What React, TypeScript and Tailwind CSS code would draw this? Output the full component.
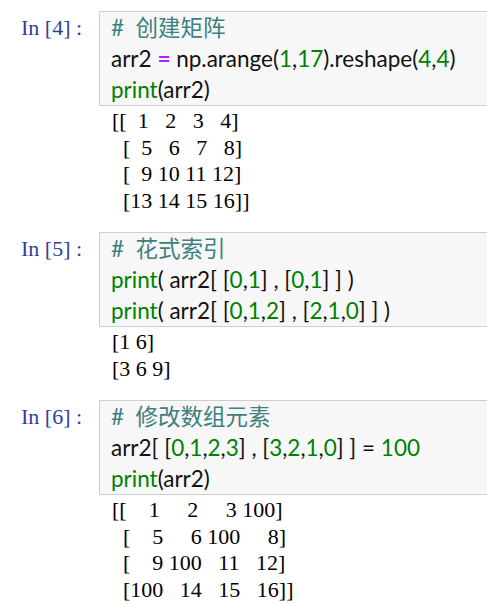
const C = ({ c, children }: { c: string; children: React.ReactNode }) => <span className={c}>{children}</span>;
const cm = "text-[#3d8080]";
const g = "text-[#008000]";
const p = "text-[#aa22ff] font-bold";

function Cell({ n, code, out }: { n: number; code: React.ReactNode[]; out: string[] }) {
  return (
    <div className="flex">
      <div className="w-[99px] shrink-0 pl-[21px] pt-[1px] text-[22px] leading-[31px] text-[#303f9f] whitespace-pre" style={{ fontFamily: '"Liberation Serif", serif' }}>
        In [{n}] :
      </div>
      <div className="flex-1 min-w-0">
        <div className="border border-[#cfcfcf] border-r-0 bg-[#f7f7f7] pl-[11px] text-[22.5px] leading-[31px] text-[#111] whitespace-pre" style={{ fontFamily: 'Lato, "Noto Sans CJK SC", sans-serif' }}>
          {code.map((l, i) => <div key={i}>{l}</div>)}
        </div>
        <div className="pl-[13px] pt-[2px] text-[22px] leading-[26.5px] text-black whitespace-pre" style={{ fontFamily: '"Liberation Serif", serif' }}>
          {out.map((l, i) => <div key={i}>{l}</div>)}
        </div>
      </div>
    </div>
  );
}

export default function App() {
  return (
    <div className="w-[487px] h-[604px] bg-white overflow-hidden pt-[11px] flex flex-col gap-[18px]">
      <Cell n={4}
        code={[
          <C c={cm}>#  创建矩阵</C>,
          <>arr2 <C c={p}>=</C> np.arange(<C c={g}>1</C>,<C c={g}>17</C>).reshape(<C c={g}>4</C>,<C c={g}>4</C>)</>,
          <><C c={g}>print</C>(arr2)</>,
        ]}
        out={["[[  1   2   3   4]", "  [  5   6   7   8]", "  [  9 10 11 12]", "  [13 14 15 16]]"]}
      />
      <Cell n={5}
        code={[
          <C c={cm}>#  花式索引</C>,
          <><C c={g}>print</C>( arr2[ [<C c={g}>0</C>,<C c={g}>1</C>] , [<C c={g}>0</C>,<C c={g}>1</C>] ] )</>,
          <><C c={g}>print</C>( arr2[ [<C c={g}>0</C>,<C c={g}>1</C>,<C c={g}>2</C>] , [<C c={g}>2</C>,<C c={g}>1</C>,<C c={g}>0</C>] ] )</>,
        ]}
        out={["[1 6]", "[3 6 9]"]}
      />
      <Cell n={6}
        code={[
          <C c={cm}>#  修改数组元素</C>,
          <>arr2[ [<C c={g}>0</C>,<C c={g}>1</C>,<C c={g}>2</C>,<C c={g}>3</C>] , [<C c={g}>3</C>,<C c={g}>2</C>,<C c={g}>1</C>,<C c={g}>0</C>] ] = <C c={g}>100</C></>,
          <><C c={g}>print</C>(arr2)</>,
        ]}
        out={["[[    1     2     3 100]", "  [    5     6 100     8]", "  [    9 100   11   12]", "  [100   14   15   16]]"]}
      />
    </div>
  );
}
